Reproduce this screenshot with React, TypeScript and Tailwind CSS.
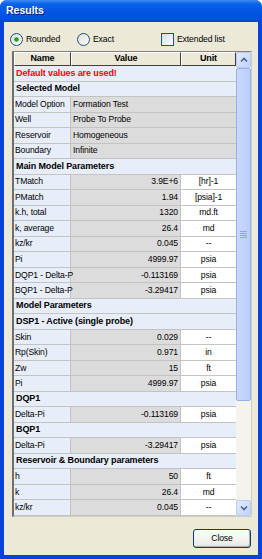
import React from "react";

type Row =
  | { k: "sec"; t: string; red?: boolean }
  | { k: "txt"; n: string; v: string }
  | { k: "num"; n: string; v: string; u: string };

const rows: Row[] = [
  { k: "sec", t: "Default values are used!", red: true },
  { k: "sec", t: "Selected Model" },
  { k: "txt", n: "Model Option", v: "Formation Test" },
  { k: "txt", n: "Well", v: "Probe To Probe" },
  { k: "txt", n: "Reservoir", v: "Homogeneous" },
  { k: "txt", n: "Boundary", v: "Infinite" },
  { k: "sec", t: "Main Model Parameters" },
  { k: "num", n: "TMatch", v: "3.9E+6", u: "[hr]-1" },
  { k: "num", n: "PMatch", v: "1.94", u: "[psia]-1" },
  { k: "num", n: "k.h, total", v: "1320", u: "md.ft" },
  { k: "num", n: "k, average", v: "26.4", u: "md" },
  { k: "num", n: "kz/kr", v: "0.045", u: "--" },
  { k: "num", n: "Pi", v: "4999.97", u: "psia" },
  { k: "num", n: "DQP1 - Delta-P", v: "-0.113169", u: "psia" },
  { k: "num", n: "BQP1 - Delta-P", v: "-3.29417", u: "psia" },
  { k: "sec", t: "Model Parameters" },
  { k: "sec", t: "DSP1 - Active (single probe)" },
  { k: "num", n: "Skin", v: "0.029", u: "--" },
  { k: "num", n: "Rp(Skin)", v: "0.971", u: "in" },
  { k: "num", n: "Zw", v: "15", u: "ft" },
  { k: "num", n: "Pi", v: "4999.97", u: "psia" },
  { k: "sec", t: "DQP1" },
  { k: "num", n: "Delta-Pi", v: "-0.113169", u: "psia" },
  { k: "sec", t: "BQP1" },
  { k: "num", n: "Delta-Pi", v: "-3.29417", u: "psia" },
  { k: "sec", t: "Reservoir & Boundary parameters" },
  { k: "num", n: "h", v: "50", u: "ft" },
  { k: "num", n: "k", v: "26.4", u: "md" },
  { k: "num", n: "kz/kr", v: "0.045", u: "--" },
];

const NAME = "bg-[#E8EEF9]";
const GRAY = "bg-[#DCDCDC]";
const LINE = "border-[#C3C3C3]";

function TableRow({ r }: { r: Row }) {
  if (r.k === "sec") {
    return (
      <div className={`h-[15.55px] flex items-center ${NAME} border-b ${LINE} pl-[2px] font-bold text-[9px] whitespace-nowrap overflow-hidden ${r.red ? "text-[#FF0000]" : "text-black"}`}>
        {r.t}
      </div>
    );
  }
  if (r.k === "txt") {
    return (
      <div className={`h-[15.55px] flex border-b ${LINE}`}>
        <div className={`relative z-[1] w-[57px] shrink-0 ${NAME} border-r ${LINE} pl-[1px] flex items-center whitespace-nowrap`}>{r.n}</div>
        <div className={`flex-1 ${GRAY} pl-[2px] flex items-center whitespace-nowrap`}>{r.v}</div>
      </div>
    );
  }
  return (
    <div className={`h-[15.55px] flex border-b ${LINE}`}>
      <div className={`relative z-[1] w-[57px] shrink-0 ${NAME} border-r ${LINE} pl-[1px] flex items-center whitespace-nowrap`}>{r.n}</div>
      <div className={`w-[110px] shrink-0 ${GRAY} border-r ${LINE} pr-[2px] flex items-center justify-end whitespace-nowrap`}>{r.v}</div>
      <div className="flex-1 bg-white flex items-center justify-center whitespace-nowrap">{r.u}</div>
    </div>
  );
}

function Radio({ checked }: { checked?: boolean }) {
  return (
    <svg width="13" height="13" viewBox="0 0 13 13" className="shrink-0">
      <defs>
        <linearGradient id={checked ? "rg1" : "rg2"} x1="0" y1="0" x2="1" y2="1">
          <stop offset="0" stopColor="#DCDBD5" />
          <stop offset="1" stopColor="#FFFFFF" />
        </linearGradient>
      </defs>
      <circle cx="6.5" cy="6.5" r="6" fill={`url(#${checked ? "rg1" : "rg2"})`} stroke="#1C5180" strokeWidth="1" />
      {checked && <circle cx="6.5" cy="6.5" r="2.3" fill="#21A121" />}
    </svg>
  );
}

function ArrowBtn({ up }: { up?: boolean }) {
  return (
    <div className="h-[16px] w-full rounded-[2px] border border-[#B8CAF5] bg-[linear-gradient(135deg,#E2EBFE,#C0D2FB)] flex items-center justify-center">
      <svg width="8" height="6" viewBox="0 0 8 6">
        <path d={up ? "M1 4.5 L4 1.5 L7 4.5" : "M1 1.5 L4 4.5 L7 1.5"} fill="none" stroke="#4D6185" strokeWidth="1.6" />
      </svg>
    </div>
  );
}

export default function App() {
  return (
    <div
      className="w-[262px] h-[559px] flex flex-col rounded-t-[7px] bg-[#0842D8] overflow-hidden text-[8.6px] tracking-[-0.12px] text-black"
      style={{ fontFamily: '"Liberation Sans", Arial, sans-serif' }}
    >
      <div className="h-[22px] shrink-0 bg-[linear-gradient(to_bottom,#3D8DF5_0%,#0A62E6_18%,#0055E6_55%,#0450DD_85%,#0447CF_100%)] flex items-center pl-[6px]">
        <span className="text-white font-bold text-[10.5px] tracking-normal [text-shadow:1px_1px_0_#0A1E80]">Results</span>
      </div>
      <div className="flex-1 mx-[4px] mb-[4px] bg-[#ECE9D8] flex flex-col">
        <div className="h-[14px] mt-[10px] flex items-center pl-[6px]">
          <div className="w-[67px] flex items-center gap-[3px]">
            <Radio checked />
            <span>Rounded</span>
          </div>
          <div className="w-[84px] flex items-center gap-[3px]">
            <Radio />
            <span>Exact</span>
          </div>
          <div className="flex items-center gap-[3px]">
            <div className="w-[13px] h-[13px] border border-[#1C5180] bg-[linear-gradient(135deg,#DCDBD5,#FFFFFF)]" />
            <span>Extended list</span>
          </div>
        </div>
        <div className="mt-[5px] ml-[8px] w-[240px] h-[466px] border-t border-l-2 border-r border-b border-t-[#808080] border-l-[#6F6F6F] border-r-[#D0CEC2] border-b-[#D0CEC2] flex">
          <div className="w-[222px] flex flex-col">
            <div className="h-[14px] flex shrink-0 font-bold text-[9px]">
              <div className="w-[57px] border-t border-l border-t-white border-l-white border-b border-r border-b-[#404040] border-r-[#404040] bg-[#ECE9D8] flex items-center justify-center">Name</div>
              <div className="w-[110px] border-t border-l border-t-white border-l-white border-b border-r border-b-[#404040] border-r-[#404040] bg-[#ECE9D8] flex items-center justify-center">Value</div>
              <div className="flex-1 border-t border-l border-t-white border-l-white border-b border-r border-b-[#404040] border-r-[#404040] bg-[#ECE9D8] flex items-center justify-center">Unit</div>
            </div>
            <div className="flex flex-col overflow-hidden">
              {rows.map((r, i) => (
                <TableRow key={i} r={r} />
              ))}
            </div>
          </div>
          <div className="w-[15px] bg-[#F4F3EE] flex flex-col">
            <ArrowBtn up />
            <div className="flex-1 relative">
              <div className="absolute left-0 right-0 top-[0px] h-[333px] rounded-[2px] border border-[#98B1EA] bg-[linear-gradient(to_right,#C9D8FC,#BBCEFA)] flex items-center justify-center">
                <div className="flex flex-col gap-[1px]">
                  {[0, 1, 2, 3].map((i) => (
                    <div key={i} className="w-[7px] h-[1px] bg-[#8CA6E6]" />
                  ))}
                </div>
              </div>
            </div>
            <ArrowBtn />
          </div>
        </div>
        <div className="flex justify-end mt-[12px] mr-[7px]">
          <div className="w-[58px] h-[19px] rounded-[3px] border border-[#003C74] bg-[linear-gradient(to_bottom,#FFFFFF,#ECEBE6_85%,#D6D0C5)] shadow-[inset_-1px_-1px_0_#B5B2A2] flex items-center justify-center">
            Close
          </div>
        </div>
      </div>
    </div>
  );
}
